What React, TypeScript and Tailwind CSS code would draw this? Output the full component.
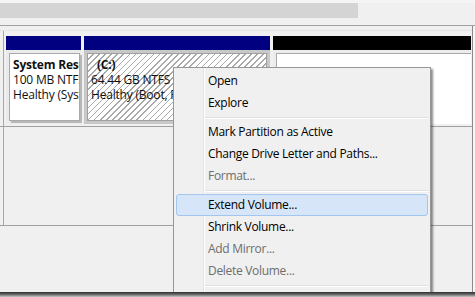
import React from "react";

const font = { fontFamily: '"Open Sans", "Noto Sans", Arial, sans-serif' };

function MenuItem({ label, disabled, active }: { label: string; disabled?: boolean; active?: boolean }) {
  return (
    <div
      className={
        "relative z-10 mx-[2px] h-[22px] flex items-center pl-[31px] text-[12px] tracking-[-0.3px] border rounded-[3px] " +
        (active ? "border-[#a3c6ee] bg-[#d6e6f8] " : "border-transparent ") +
        (disabled ? "text-[#6d6d6d]" : "text-[#000]")
      }
    >
      <span className="whitespace-nowrap leading-[22px]">{label}</span>
    </div>
  );
}

function Sep() {
  return (
    <div className="h-[7px] flex flex-col justify-center pl-[31px] pr-[2px]">
      <div className="h-px bg-[#e0e0e0]" />
      <div className="h-px bg-white" />
    </div>
  );
}

export default function App() {
  return (
    <div className="w-[475px] h-[297px] flex flex-col bg-[#f0f0f0] overflow-hidden" style={font}>
      <div className="h-[292px] relative flex flex-col overflow-hidden">
        <div className="h-[3px] bg-[#f4f4f4]" />
        <div className="h-[15px] flex">
          <div className="w-[358px] bg-[#d4d4d4]" />
        </div>
        <div className="h-[7px]" />
        <div className="h-px bg-[#a0a0a0]" />
        <div className="flex-1 flex">
          <div className="w-[472px] flex flex-col">
            <div className="h-[4px]" />
            <div className="h-px bg-[#e4e4e4]" />
            {/* disk row */}
            <div className="border-b border-[#a0a0a0]">
              <div className="ml-[3px] border-l border-[#a8a8a8] pl-[2px] pt-[5px] pb-[2px] flex gap-[3px]">
                {/* system reserved */}
                <div className="w-[75px] flex flex-col">
                  <div className="h-[14px] bg-[#000080]" />
                  <div className="h-[74px] bg-[#ebebeb] pt-[3px] pl-[3px] flex">
                    <div className="w-[71px] h-[68px] bg-white border border-[#a9a9a9] shadow-[2px_2px_0_#b8b8b8] overflow-hidden px-[3px] pt-[3px] text-[12px] tracking-[-0.2px] leading-[15px] text-[#111] whitespace-nowrap">
                      <div className="font-bold">System Reserved</div>
                      <div>100 MB NTFS</div>
                      <div>Healthy (System, Active, Primary Partition)</div>
                    </div>
                  </div>
                </div>
                {/* C: */}
                <div className="w-[186px] flex flex-col">
                  <div className="h-[14px] bg-[#000080]" />
                  <div className="h-[74px] bg-[#c8c8c8] p-[3px] flex">
                    <div className="flex-1 border border-[#a0a0a0] bg-[repeating-linear-gradient(135deg,#ffffff_0px,#ffffff_3.2px,#a8a8a8_3.2px,#a8a8a8_4.3px)] overflow-hidden px-[3px] pt-[3px] text-[12px] tracking-[-0.2px] leading-[15px] text-[#111] whitespace-nowrap">
                      <div className="font-bold pl-[6px]">(C:)</div>
                      <div>64.44 GB NTFS 100 GB</div>
                      <div>Healthy (Boot, Page File, Crash Dump)</div>
                    </div>
                  </div>
                </div>
                {/* unallocated */}
                <div className="w-[198px] flex flex-col">
                  <div className="h-[14px] bg-black" />
                  <div className="h-[74px] bg-[#ececec] pt-[3px] pl-[3px] flex">
                    <div className="flex-1 bg-white border-l border-t border-[#a9a9a9]" />
                  </div>
                </div>
              </div>
            </div>
            <div className="h-[99px] border-b border-[#a0a0a0]">
              <div className="ml-[3px] h-full border-l border-[#a8a8a8]" />
            </div>
            <div className="flex-1" />
          </div>
          <div className="w-px bg-[#8a8a8a]" />
          <div className="flex-1 bg-[#f6f6f6]" />
        </div>

        {/* context menu */}
        <div className="absolute left-[173px] top-[67px] w-[258px] h-[240px] bg-[#f0f0f0] border border-[#979797] shadow-[2px_2px_2px_rgba(0,0,0,0.45)] pt-[2px]">
          <div className="absolute left-[29px] top-0 bottom-0 w-px bg-[#e2e3e3]" />
          <div className="absolute left-[30px] top-0 bottom-0 w-px bg-white" />
          <MenuItem label="Open" />
          <MenuItem label="Explore" />
          <Sep />
          <MenuItem label="Mark Partition as Active" />
          <MenuItem label="Change Drive Letter and Paths..." />
          <MenuItem label="Format..." disabled />
          <Sep />
          <MenuItem label="Extend Volume..." active />
          <MenuItem label="Shrink Volume..." />
          <MenuItem label="Add Mirror..." disabled />
          <MenuItem label="Delete Volume..." disabled />
          <Sep />
          <MenuItem label="Properties" />
        </div>
      </div>
      <div className="h-[5px] bg-gradient-to-b from-[#2e2e2e] via-[#6a6a6a] to-[#c8c8c8]" />
    </div>
  );
}
